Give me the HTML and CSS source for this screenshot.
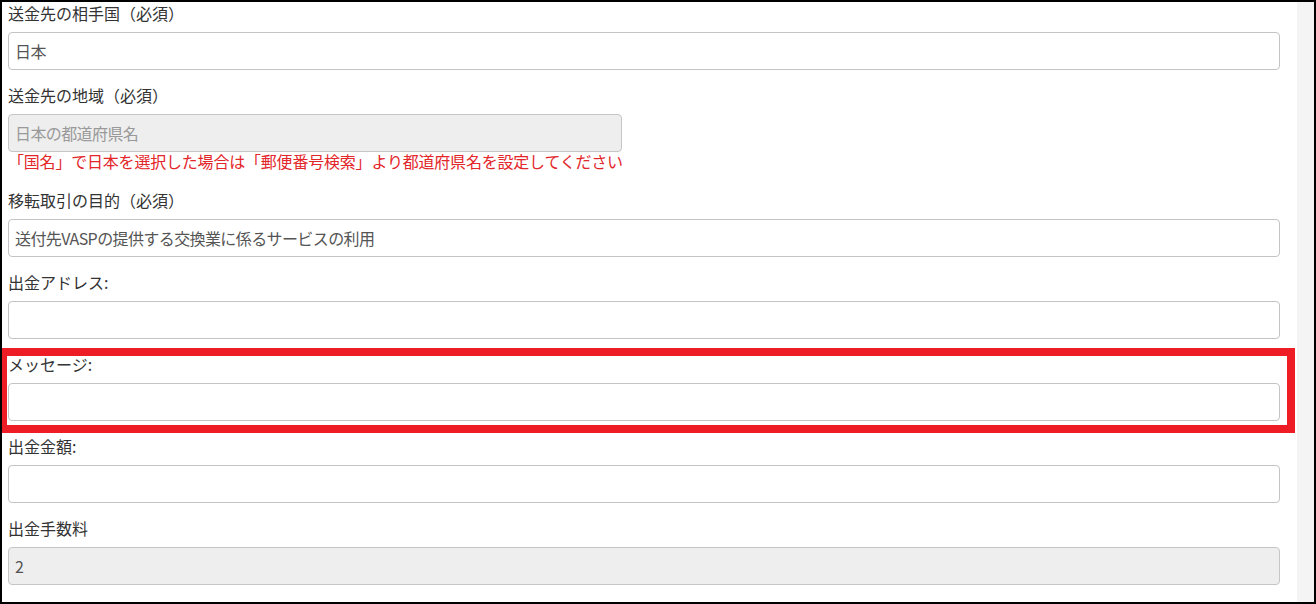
FILE: index.html
```html
<!DOCTYPE html>
<html lang="ja">
<head>
<meta charset="utf-8">
<title>送金先</title>
<link rel="stylesheet" href="styles.css">
</head>
<body>
<div class="frame">
  <div class="content">
    <div class="group">
      <label class="label">送金先の相手国（必須）</label>
      <input class="field" type="text" value="日本">
    </div>
    <div class="group group-help">
      <label class="label">送金先の地域（必須）</label>
      <input class="field field-disabled field-short" type="text" placeholder="日本の都道府県名" disabled>
      <p class="help">「国名」で日本を選択した場合は「郵便番号検索」より都道府県名を設定してください</p>
    </div>
    <div class="group">
      <label class="label">移転取引の目的（必須）</label>
      <input class="field" type="text" value="送付先VASPの提供する交換業に係るサービスの利用">
    </div>
    <div class="group">
      <label class="label">出金アドレス:</label>
      <input class="field" type="text">
    </div>
    <div class="highlight">
      <div class="group">
        <label class="label">メッセージ:</label>
        <input class="field" type="text">
      </div>
    </div>
    <div class="group">
      <label class="label">出金金額:</label>
      <input class="field" type="text">
    </div>
    <div class="group">
      <label class="label">出金手数料</label>
      <input class="field field-disabled" type="text" value="2" disabled>
    </div>
  </div>
  <div class="scrollbar"></div>
</div>
</body>
</html>
```

FILE: styles.css
```css
* {
  box-sizing: border-box;
}

html, body {
  margin: 0;
  padding: 0;
  background: #fff;
}

body {
  font-family: "Noto Sans CJK JP", "Noto Sans", sans-serif;
  font-size: 16px;
  color: #333;
}

.frame {
  width: 1316px;
  height: 604px;
  border: 2px solid #000;
  display: flex;
  overflow: hidden;
}

.content {
  flex: 1;
  padding: 4px 17px 0 6px;
  background: #fff;
  overflow: hidden;
}

.scrollbar {
  width: 17px;
  background: #f4f4f4;
}

.group {
  margin-bottom: 18px;
}

.group-help {
  margin-bottom: 0;
}

.label {
  display: block;
  line-height: 15px;
  margin-bottom: 11px;
  color: #333;
}

.field {
  display: block;
  width: 100%;
  height: 38px;
  padding: 0 6px;
  border: 1px solid #c4c4c4;
  border-radius: 4px;
  background: #fff;
  font-family: "Noto Sans CJK JP", "Noto Sans", sans-serif;
  font-size: 16px;
  letter-spacing: -0.6px;
  color: #555;
  outline: none;
}

.field-disabled {
  background: #eeeeee;
  border-color: #c6c6c6;
  color: #555;
  opacity: 1;
  -webkit-text-fill-color: #555;
}

.field-disabled::placeholder {
  color: #999;
  -webkit-text-fill-color: #999;
  opacity: 1;
}

.field-short {
  width: 614px;
}

.help {
  margin: 0 0 20px;
  line-height: 19px;
  padding-bottom: 2px;
  color: #e3262a;
  letter-spacing: -0.2px;
  white-space: nowrap;
}

.highlight {
  margin: -9px -15px 6px -9px;
  border: 8px solid #ee1c24;
  padding: 1px 7px 4px 1px;
}

.highlight .group {
  margin-bottom: 0;
}
```
